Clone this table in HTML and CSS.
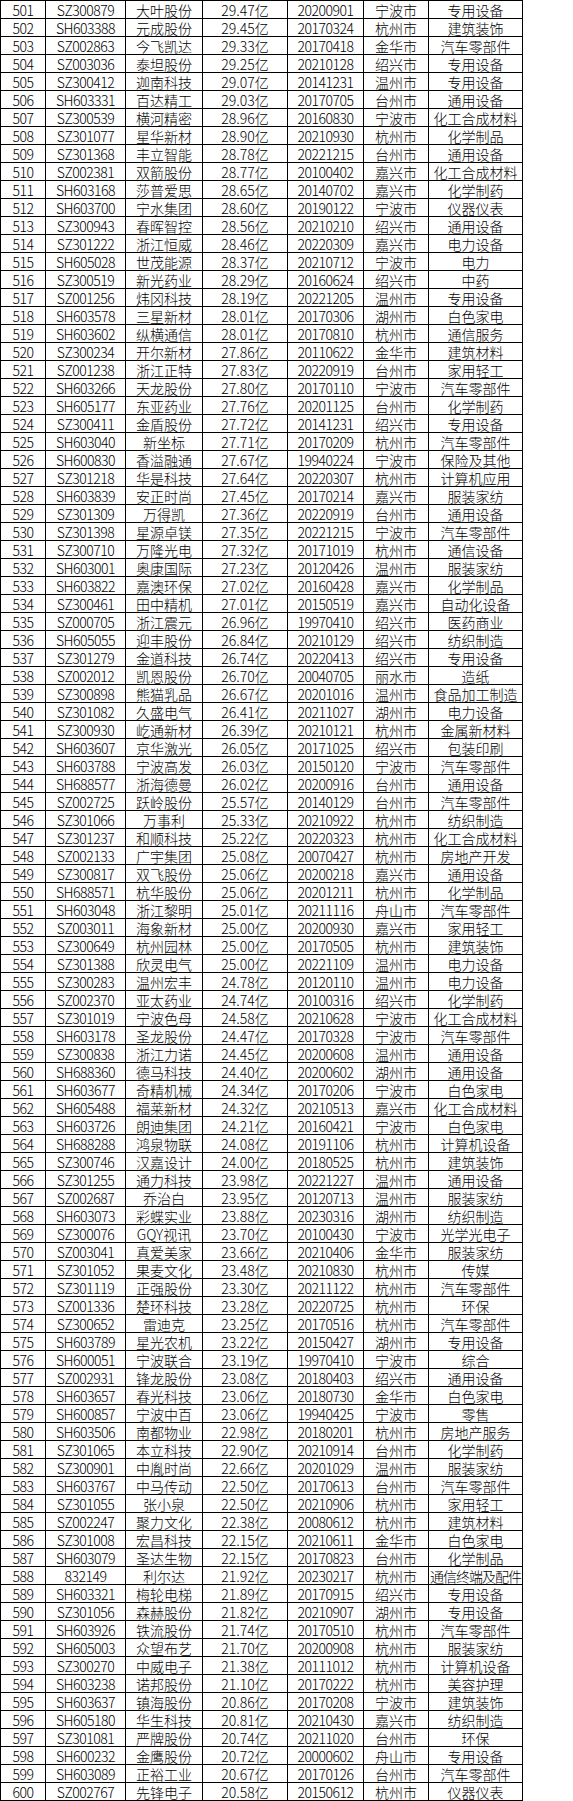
FILE: index.html
```html
<!DOCTYPE html>
<html lang="zh-CN">
<head>
<meta charset="utf-8">
<title>浙江上市公司市值排名 501-600</title>
<link rel="stylesheet" href="styles.css">
</head>
<body>
<div class="sheet">
<div class="row"><div class="cell num">501</div><div class="cell num">SZ300879</div><div class="cell">大叶股份</div><div class="cell">29.47亿</div><div class="cell num">20200901</div><div class="cell">宁波市</div><div class="cell">专用设备</div></div>
<div class="row"><div class="cell num">502</div><div class="cell num">SH603388</div><div class="cell">元成股份</div><div class="cell">29.45亿</div><div class="cell num">20170324</div><div class="cell">杭州市</div><div class="cell">建筑装饰</div></div>
<div class="row"><div class="cell num">503</div><div class="cell num">SZ002863</div><div class="cell">今飞凯达</div><div class="cell">29.33亿</div><div class="cell num">20170418</div><div class="cell">金华市</div><div class="cell">汽车零部件</div></div>
<div class="row"><div class="cell num">504</div><div class="cell num">SZ003036</div><div class="cell">泰坦股份</div><div class="cell">29.25亿</div><div class="cell num">20210128</div><div class="cell">绍兴市</div><div class="cell">专用设备</div></div>
<div class="row"><div class="cell num">505</div><div class="cell num">SZ300412</div><div class="cell">迦南科技</div><div class="cell">29.07亿</div><div class="cell num">20141231</div><div class="cell">温州市</div><div class="cell">专用设备</div></div>
<div class="row"><div class="cell num">506</div><div class="cell num">SH603331</div><div class="cell">百达精工</div><div class="cell">29.03亿</div><div class="cell num">20170705</div><div class="cell">台州市</div><div class="cell">通用设备</div></div>
<div class="row"><div class="cell num">507</div><div class="cell num">SZ300539</div><div class="cell">横河精密</div><div class="cell">28.96亿</div><div class="cell num">20160830</div><div class="cell">宁波市</div><div class="cell">化工合成材料</div></div>
<div class="row"><div class="cell num">508</div><div class="cell num">SZ301077</div><div class="cell">星华新材</div><div class="cell">28.90亿</div><div class="cell num">20210930</div><div class="cell">杭州市</div><div class="cell">化学制品</div></div>
<div class="row"><div class="cell num">509</div><div class="cell num">SZ301368</div><div class="cell">丰立智能</div><div class="cell">28.78亿</div><div class="cell num">20221215</div><div class="cell">台州市</div><div class="cell">通用设备</div></div>
<div class="row"><div class="cell num">510</div><div class="cell num">SZ002381</div><div class="cell">双箭股份</div><div class="cell">28.77亿</div><div class="cell num">20100402</div><div class="cell">嘉兴市</div><div class="cell">化工合成材料</div></div>
<div class="row"><div class="cell num">511</div><div class="cell num">SH603168</div><div class="cell">莎普爱思</div><div class="cell">28.65亿</div><div class="cell num">20140702</div><div class="cell">嘉兴市</div><div class="cell">化学制药</div></div>
<div class="row"><div class="cell num">512</div><div class="cell num">SH603700</div><div class="cell">宁水集团</div><div class="cell">28.60亿</div><div class="cell num">20190122</div><div class="cell">宁波市</div><div class="cell">仪器仪表</div></div>
<div class="row"><div class="cell num">513</div><div class="cell num">SZ300943</div><div class="cell">春晖智控</div><div class="cell">28.56亿</div><div class="cell num">20210210</div><div class="cell">绍兴市</div><div class="cell">通用设备</div></div>
<div class="row"><div class="cell num">514</div><div class="cell num">SZ301222</div><div class="cell">浙江恒威</div><div class="cell">28.46亿</div><div class="cell num">20220309</div><div class="cell">嘉兴市</div><div class="cell">电力设备</div></div>
<div class="row"><div class="cell num">515</div><div class="cell num">SH605028</div><div class="cell">世茂能源</div><div class="cell">28.37亿</div><div class="cell num">20210712</div><div class="cell">宁波市</div><div class="cell">电力</div></div>
<div class="row"><div class="cell num">516</div><div class="cell num">SZ300519</div><div class="cell">新光药业</div><div class="cell">28.29亿</div><div class="cell num">20160624</div><div class="cell">绍兴市</div><div class="cell">中药</div></div>
<div class="row"><div class="cell num">517</div><div class="cell num">SZ001256</div><div class="cell">炜冈科技</div><div class="cell">28.19亿</div><div class="cell num">20221205</div><div class="cell">温州市</div><div class="cell">专用设备</div></div>
<div class="row"><div class="cell num">518</div><div class="cell num">SH603578</div><div class="cell">三星新材</div><div class="cell">28.01亿</div><div class="cell num">20170306</div><div class="cell">湖州市</div><div class="cell">白色家电</div></div>
<div class="row"><div class="cell num">519</div><div class="cell num">SH603602</div><div class="cell">纵横通信</div><div class="cell">28.01亿</div><div class="cell num">20170810</div><div class="cell">杭州市</div><div class="cell">通信服务</div></div>
<div class="row"><div class="cell num">520</div><div class="cell num">SZ300234</div><div class="cell">开尔新材</div><div class="cell">27.86亿</div><div class="cell num">20110622</div><div class="cell">金华市</div><div class="cell">建筑材料</div></div>
<div class="row"><div class="cell num">521</div><div class="cell num">SZ001238</div><div class="cell">浙江正特</div><div class="cell">27.83亿</div><div class="cell num">20220919</div><div class="cell">台州市</div><div class="cell">家用轻工</div></div>
<div class="row"><div class="cell num">522</div><div class="cell num">SH603266</div><div class="cell">天龙股份</div><div class="cell">27.80亿</div><div class="cell num">20170110</div><div class="cell">宁波市</div><div class="cell">汽车零部件</div></div>
<div class="row"><div class="cell num">523</div><div class="cell num">SH605177</div><div class="cell">东亚药业</div><div class="cell">27.76亿</div><div class="cell num">20201125</div><div class="cell">台州市</div><div class="cell">化学制药</div></div>
<div class="row"><div class="cell num">524</div><div class="cell num">SZ300411</div><div class="cell">金盾股份</div><div class="cell">27.72亿</div><div class="cell num">20141231</div><div class="cell">绍兴市</div><div class="cell">专用设备</div></div>
<div class="row"><div class="cell num">525</div><div class="cell num">SH603040</div><div class="cell">新坐标</div><div class="cell">27.71亿</div><div class="cell num">20170209</div><div class="cell">杭州市</div><div class="cell">汽车零部件</div></div>
<div class="row"><div class="cell num">526</div><div class="cell num">SH600830</div><div class="cell">香溢融通</div><div class="cell">27.67亿</div><div class="cell num">19940224</div><div class="cell">宁波市</div><div class="cell">保险及其他</div></div>
<div class="row"><div class="cell num">527</div><div class="cell num">SZ301218</div><div class="cell">华是科技</div><div class="cell">27.64亿</div><div class="cell num">20220307</div><div class="cell">杭州市</div><div class="cell">计算机应用</div></div>
<div class="row"><div class="cell num">528</div><div class="cell num">SH603839</div><div class="cell">安正时尚</div><div class="cell">27.45亿</div><div class="cell num">20170214</div><div class="cell">嘉兴市</div><div class="cell">服装家纺</div></div>
<div class="row"><div class="cell num">529</div><div class="cell num">SZ301309</div><div class="cell">万得凯</div><div class="cell">27.36亿</div><div class="cell num">20220919</div><div class="cell">台州市</div><div class="cell">通用设备</div></div>
<div class="row"><div class="cell num">530</div><div class="cell num">SZ301398</div><div class="cell">星源卓镁</div><div class="cell">27.35亿</div><div class="cell num">20221215</div><div class="cell">宁波市</div><div class="cell">汽车零部件</div></div>
<div class="row"><div class="cell num">531</div><div class="cell num">SZ300710</div><div class="cell">万隆光电</div><div class="cell">27.32亿</div><div class="cell num">20171019</div><div class="cell">杭州市</div><div class="cell">通信设备</div></div>
<div class="row"><div class="cell num">532</div><div class="cell num">SH603001</div><div class="cell">奥康国际</div><div class="cell">27.23亿</div><div class="cell num">20120426</div><div class="cell">温州市</div><div class="cell">服装家纺</div></div>
<div class="row"><div class="cell num">533</div><div class="cell num">SH603822</div><div class="cell">嘉澳环保</div><div class="cell">27.02亿</div><div class="cell num">20160428</div><div class="cell">嘉兴市</div><div class="cell">化学制品</div></div>
<div class="row"><div class="cell num">534</div><div class="cell num">SZ300461</div><div class="cell">田中精机</div><div class="cell">27.01亿</div><div class="cell num">20150519</div><div class="cell">嘉兴市</div><div class="cell">自动化设备</div></div>
<div class="row"><div class="cell num">535</div><div class="cell num">SZ000705</div><div class="cell">浙江震元</div><div class="cell">26.96亿</div><div class="cell num">19970410</div><div class="cell">绍兴市</div><div class="cell">医药商业</div></div>
<div class="row"><div class="cell num">536</div><div class="cell num">SH605055</div><div class="cell">迎丰股份</div><div class="cell">26.84亿</div><div class="cell num">20210129</div><div class="cell">绍兴市</div><div class="cell">纺织制造</div></div>
<div class="row"><div class="cell num">537</div><div class="cell num">SZ301279</div><div class="cell">金道科技</div><div class="cell">26.74亿</div><div class="cell num">20220413</div><div class="cell">绍兴市</div><div class="cell">专用设备</div></div>
<div class="row"><div class="cell num">538</div><div class="cell num">SZ002012</div><div class="cell">凯恩股份</div><div class="cell">26.70亿</div><div class="cell num">20040705</div><div class="cell">丽水市</div><div class="cell">造纸</div></div>
<div class="row"><div class="cell num">539</div><div class="cell num">SZ300898</div><div class="cell">熊猫乳品</div><div class="cell">26.67亿</div><div class="cell num">20201016</div><div class="cell">温州市</div><div class="cell">食品加工制造</div></div>
<div class="row"><div class="cell num">540</div><div class="cell num">SZ301082</div><div class="cell">久盛电气</div><div class="cell">26.41亿</div><div class="cell num">20211027</div><div class="cell">湖州市</div><div class="cell">电力设备</div></div>
<div class="row"><div class="cell num">541</div><div class="cell num">SZ300930</div><div class="cell">屹通新材</div><div class="cell">26.39亿</div><div class="cell num">20210121</div><div class="cell">杭州市</div><div class="cell">金属新材料</div></div>
<div class="row"><div class="cell num">542</div><div class="cell num">SH603607</div><div class="cell">京华激光</div><div class="cell">26.05亿</div><div class="cell num">20171025</div><div class="cell">绍兴市</div><div class="cell">包装印刷</div></div>
<div class="row"><div class="cell num">543</div><div class="cell num">SH603788</div><div class="cell">宁波高发</div><div class="cell">26.03亿</div><div class="cell num">20150120</div><div class="cell">宁波市</div><div class="cell">汽车零部件</div></div>
<div class="row"><div class="cell num">544</div><div class="cell num">SH688577</div><div class="cell">浙海德曼</div><div class="cell">26.02亿</div><div class="cell num">20200916</div><div class="cell">台州市</div><div class="cell">通用设备</div></div>
<div class="row"><div class="cell num">545</div><div class="cell num">SZ002725</div><div class="cell">跃岭股份</div><div class="cell">25.57亿</div><div class="cell num">20140129</div><div class="cell">台州市</div><div class="cell">汽车零部件</div></div>
<div class="row"><div class="cell num">546</div><div class="cell num">SZ301066</div><div class="cell">万事利</div><div class="cell">25.33亿</div><div class="cell num">20210922</div><div class="cell">杭州市</div><div class="cell">纺织制造</div></div>
<div class="row"><div class="cell num">547</div><div class="cell num">SZ301237</div><div class="cell">和顺科技</div><div class="cell">25.22亿</div><div class="cell num">20220323</div><div class="cell">杭州市</div><div class="cell">化工合成材料</div></div>
<div class="row"><div class="cell num">548</div><div class="cell num">SZ002133</div><div class="cell">广宇集团</div><div class="cell">25.08亿</div><div class="cell num">20070427</div><div class="cell">杭州市</div><div class="cell">房地产开发</div></div>
<div class="row"><div class="cell num">549</div><div class="cell num">SZ300817</div><div class="cell">双飞股份</div><div class="cell">25.06亿</div><div class="cell num">20200218</div><div class="cell">嘉兴市</div><div class="cell">通用设备</div></div>
<div class="row"><div class="cell num">550</div><div class="cell num">SH688571</div><div class="cell">杭华股份</div><div class="cell">25.06亿</div><div class="cell num">20201211</div><div class="cell">杭州市</div><div class="cell">化学制品</div></div>
<div class="row"><div class="cell num">551</div><div class="cell num">SH603048</div><div class="cell">浙江黎明</div><div class="cell">25.01亿</div><div class="cell num">20211116</div><div class="cell">舟山市</div><div class="cell">汽车零部件</div></div>
<div class="row"><div class="cell num">552</div><div class="cell num">SZ003011</div><div class="cell">海象新材</div><div class="cell">25.00亿</div><div class="cell num">20200930</div><div class="cell">嘉兴市</div><div class="cell">家用轻工</div></div>
<div class="row"><div class="cell num">553</div><div class="cell num">SZ300649</div><div class="cell">杭州园林</div><div class="cell">25.00亿</div><div class="cell num">20170505</div><div class="cell">杭州市</div><div class="cell">建筑装饰</div></div>
<div class="row"><div class="cell num">554</div><div class="cell num">SZ301388</div><div class="cell">欣灵电气</div><div class="cell">25.00亿</div><div class="cell num">20221109</div><div class="cell">温州市</div><div class="cell">电力设备</div></div>
<div class="row"><div class="cell num">555</div><div class="cell num">SZ300283</div><div class="cell">温州宏丰</div><div class="cell">24.78亿</div><div class="cell num">20120110</div><div class="cell">温州市</div><div class="cell">电力设备</div></div>
<div class="row"><div class="cell num">556</div><div class="cell num">SZ002370</div><div class="cell">亚太药业</div><div class="cell">24.74亿</div><div class="cell num">20100316</div><div class="cell">绍兴市</div><div class="cell">化学制药</div></div>
<div class="row"><div class="cell num">557</div><div class="cell num">SZ301019</div><div class="cell">宁波色母</div><div class="cell">24.58亿</div><div class="cell num">20210628</div><div class="cell">宁波市</div><div class="cell">化工合成材料</div></div>
<div class="row"><div class="cell num">558</div><div class="cell num">SH603178</div><div class="cell">圣龙股份</div><div class="cell">24.47亿</div><div class="cell num">20170328</div><div class="cell">宁波市</div><div class="cell">汽车零部件</div></div>
<div class="row"><div class="cell num">559</div><div class="cell num">SZ300838</div><div class="cell">浙江力诺</div><div class="cell">24.45亿</div><div class="cell num">20200608</div><div class="cell">温州市</div><div class="cell">通用设备</div></div>
<div class="row"><div class="cell num">560</div><div class="cell num">SH688360</div><div class="cell">德马科技</div><div class="cell">24.40亿</div><div class="cell num">20200602</div><div class="cell">湖州市</div><div class="cell">通用设备</div></div>
<div class="row"><div class="cell num">561</div><div class="cell num">SH603677</div><div class="cell">奇精机械</div><div class="cell">24.34亿</div><div class="cell num">20170206</div><div class="cell">宁波市</div><div class="cell">白色家电</div></div>
<div class="row"><div class="cell num">562</div><div class="cell num">SH605488</div><div class="cell">福莱新材</div><div class="cell">24.32亿</div><div class="cell num">20210513</div><div class="cell">嘉兴市</div><div class="cell">化工合成材料</div></div>
<div class="row"><div class="cell num">563</div><div class="cell num">SH603726</div><div class="cell">朗迪集团</div><div class="cell">24.21亿</div><div class="cell num">20160421</div><div class="cell">宁波市</div><div class="cell">白色家电</div></div>
<div class="row"><div class="cell num">564</div><div class="cell num">SH688288</div><div class="cell">鸿泉物联</div><div class="cell">24.08亿</div><div class="cell num">20191106</div><div class="cell">杭州市</div><div class="cell">计算机设备</div></div>
<div class="row"><div class="cell num">565</div><div class="cell num">SZ300746</div><div class="cell">汉嘉设计</div><div class="cell">24.00亿</div><div class="cell num">20180525</div><div class="cell">杭州市</div><div class="cell">建筑装饰</div></div>
<div class="row"><div class="cell num">566</div><div class="cell num">SZ301255</div><div class="cell">通力科技</div><div class="cell">23.98亿</div><div class="cell num">20221227</div><div class="cell">温州市</div><div class="cell">通用设备</div></div>
<div class="row"><div class="cell num">567</div><div class="cell num">SZ002687</div><div class="cell">乔治白</div><div class="cell">23.95亿</div><div class="cell num">20120713</div><div class="cell">温州市</div><div class="cell">服装家纺</div></div>
<div class="row"><div class="cell num">568</div><div class="cell num">SH603073</div><div class="cell">彩蝶实业</div><div class="cell">23.88亿</div><div class="cell num">20230316</div><div class="cell">湖州市</div><div class="cell">纺织制造</div></div>
<div class="row"><div class="cell num">569</div><div class="cell num">SZ300076</div><div class="cell">GQY视讯</div><div class="cell">23.70亿</div><div class="cell num">20100430</div><div class="cell">宁波市</div><div class="cell">光学光电子</div></div>
<div class="row"><div class="cell num">570</div><div class="cell num">SZ003041</div><div class="cell">真爱美家</div><div class="cell">23.66亿</div><div class="cell num">20210406</div><div class="cell">金华市</div><div class="cell">服装家纺</div></div>
<div class="row"><div class="cell num">571</div><div class="cell num">SZ301052</div><div class="cell">果麦文化</div><div class="cell">23.48亿</div><div class="cell num">20210830</div><div class="cell">杭州市</div><div class="cell">传媒</div></div>
<div class="row"><div class="cell num">572</div><div class="cell num">SZ301119</div><div class="cell">正强股份</div><div class="cell">23.30亿</div><div class="cell num">20211122</div><div class="cell">杭州市</div><div class="cell">汽车零部件</div></div>
<div class="row"><div class="cell num">573</div><div class="cell num">SZ001336</div><div class="cell">楚环科技</div><div class="cell">23.28亿</div><div class="cell num">20220725</div><div class="cell">杭州市</div><div class="cell">环保</div></div>
<div class="row"><div class="cell num">574</div><div class="cell num">SZ300652</div><div class="cell">雷迪克</div><div class="cell">23.25亿</div><div class="cell num">20170516</div><div class="cell">杭州市</div><div class="cell">汽车零部件</div></div>
<div class="row"><div class="cell num">575</div><div class="cell num">SH603789</div><div class="cell">星光农机</div><div class="cell">23.22亿</div><div class="cell num">20150427</div><div class="cell">湖州市</div><div class="cell">专用设备</div></div>
<div class="row"><div class="cell num">576</div><div class="cell num">SH600051</div><div class="cell">宁波联合</div><div class="cell">23.19亿</div><div class="cell num">19970410</div><div class="cell">宁波市</div><div class="cell">综合</div></div>
<div class="row"><div class="cell num">577</div><div class="cell num">SZ002931</div><div class="cell">锋龙股份</div><div class="cell">23.08亿</div><div class="cell num">20180403</div><div class="cell">绍兴市</div><div class="cell">通用设备</div></div>
<div class="row"><div class="cell num">578</div><div class="cell num">SH603657</div><div class="cell">春光科技</div><div class="cell">23.06亿</div><div class="cell num">20180730</div><div class="cell">金华市</div><div class="cell">白色家电</div></div>
<div class="row"><div class="cell num">579</div><div class="cell num">SH600857</div><div class="cell">宁波中百</div><div class="cell">23.06亿</div><div class="cell num">19940425</div><div class="cell">宁波市</div><div class="cell">零售</div></div>
<div class="row"><div class="cell num">580</div><div class="cell num">SH603506</div><div class="cell">南都物业</div><div class="cell">22.98亿</div><div class="cell num">20180201</div><div class="cell">杭州市</div><div class="cell">房地产服务</div></div>
<div class="row"><div class="cell num">581</div><div class="cell num">SZ301065</div><div class="cell">本立科技</div><div class="cell">22.90亿</div><div class="cell num">20210914</div><div class="cell">台州市</div><div class="cell">化学制药</div></div>
<div class="row"><div class="cell num">582</div><div class="cell num">SZ300901</div><div class="cell">中胤时尚</div><div class="cell">22.66亿</div><div class="cell num">20201029</div><div class="cell">温州市</div><div class="cell">服装家纺</div></div>
<div class="row"><div class="cell num">583</div><div class="cell num">SH603767</div><div class="cell">中马传动</div><div class="cell">22.50亿</div><div class="cell num">20170613</div><div class="cell">台州市</div><div class="cell">汽车零部件</div></div>
<div class="row"><div class="cell num">584</div><div class="cell num">SZ301055</div><div class="cell">张小泉</div><div class="cell">22.50亿</div><div class="cell num">20210906</div><div class="cell">杭州市</div><div class="cell">家用轻工</div></div>
<div class="row"><div class="cell num">585</div><div class="cell num">SZ002247</div><div class="cell">聚力文化</div><div class="cell">22.38亿</div><div class="cell num">20080612</div><div class="cell">杭州市</div><div class="cell">建筑材料</div></div>
<div class="row"><div class="cell num">586</div><div class="cell num">SZ301008</div><div class="cell">宏昌科技</div><div class="cell">22.15亿</div><div class="cell num">20210611</div><div class="cell">金华市</div><div class="cell">白色家电</div></div>
<div class="row"><div class="cell num">587</div><div class="cell num">SH603079</div><div class="cell">圣达生物</div><div class="cell">22.15亿</div><div class="cell num">20170823</div><div class="cell">台州市</div><div class="cell">化学制品</div></div>
<div class="row"><div class="cell num">588</div><div class="cell num">832149</div><div class="cell">利尔达</div><div class="cell">21.92亿</div><div class="cell num">20230217</div><div class="cell">杭州市</div><div class="cell tight">通信终端及配件</div></div>
<div class="row"><div class="cell num">589</div><div class="cell num">SH603321</div><div class="cell">梅轮电梯</div><div class="cell">21.89亿</div><div class="cell num">20170915</div><div class="cell">绍兴市</div><div class="cell">专用设备</div></div>
<div class="row"><div class="cell num">590</div><div class="cell num">SZ301056</div><div class="cell">森赫股份</div><div class="cell">21.82亿</div><div class="cell num">20210907</div><div class="cell">湖州市</div><div class="cell">专用设备</div></div>
<div class="row"><div class="cell num">591</div><div class="cell num">SH603926</div><div class="cell">铁流股份</div><div class="cell">21.74亿</div><div class="cell num">20170510</div><div class="cell">杭州市</div><div class="cell">汽车零部件</div></div>
<div class="row"><div class="cell num">592</div><div class="cell num">SH605003</div><div class="cell">众望布艺</div><div class="cell">21.70亿</div><div class="cell num">20200908</div><div class="cell">杭州市</div><div class="cell">服装家纺</div></div>
<div class="row"><div class="cell num">593</div><div class="cell num">SZ300270</div><div class="cell">中威电子</div><div class="cell">21.38亿</div><div class="cell num">20111012</div><div class="cell">杭州市</div><div class="cell">计算机设备</div></div>
<div class="row"><div class="cell num">594</div><div class="cell num">SH603238</div><div class="cell">诺邦股份</div><div class="cell">21.10亿</div><div class="cell num">20170222</div><div class="cell">杭州市</div><div class="cell">美容护理</div></div>
<div class="row"><div class="cell num">595</div><div class="cell num">SH603637</div><div class="cell">镇海股份</div><div class="cell">20.86亿</div><div class="cell num">20170208</div><div class="cell">宁波市</div><div class="cell">建筑装饰</div></div>
<div class="row"><div class="cell num">596</div><div class="cell num">SH605180</div><div class="cell">华生科技</div><div class="cell">20.81亿</div><div class="cell num">20210430</div><div class="cell">嘉兴市</div><div class="cell">纺织制造</div></div>
<div class="row"><div class="cell num">597</div><div class="cell num">SZ301081</div><div class="cell">严牌股份</div><div class="cell">20.74亿</div><div class="cell num">20211020</div><div class="cell">台州市</div><div class="cell">环保</div></div>
<div class="row"><div class="cell num">598</div><div class="cell num">SH600232</div><div class="cell">金鹰股份</div><div class="cell">20.72亿</div><div class="cell num">20000602</div><div class="cell">舟山市</div><div class="cell">专用设备</div></div>
<div class="row"><div class="cell num">599</div><div class="cell num">SH603089</div><div class="cell">正裕工业</div><div class="cell">20.67亿</div><div class="cell num">20170126</div><div class="cell">台州市</div><div class="cell">汽车零部件</div></div>
<div class="row"><div class="cell num">600</div><div class="cell num">SZ002767</div><div class="cell">先锋电子</div><div class="cell">20.58亿</div><div class="cell num">20150612</div><div class="cell">杭州市</div><div class="cell">仪器仪表</div></div>
</div>
</body>
</html>
```

FILE: styles.css
```css
html, body {
  margin: 0;
  padding: 0;
  background: #ffffff;
}

body {
  font-family: "Noto Sans CJK SC", "Noto Sans CJK JP", sans-serif;
  font-size: 14px;
  font-weight: 300;
  color: #000000;
}

.sheet {
  width: 523px;
  box-sizing: border-box;
  border-left: 1px solid #000000;
  border-top: 1px solid #000000;
}

.row {
  display: grid;
  grid-template-columns: 45px 80px 77px 85px 76px 65px 94px;
}

.cell {
  box-sizing: border-box;
  height: 18px;
  padding-top: 1px;
  border-right: 1px solid #000000;
  border-bottom: 1px solid #000000;
  text-align: center;
  line-height: 17px;
  white-space: nowrap;
  overflow: visible;
}

.num {
  letter-spacing: -0.5px;
}

.tight {
  letter-spacing: -1px;
}
```
